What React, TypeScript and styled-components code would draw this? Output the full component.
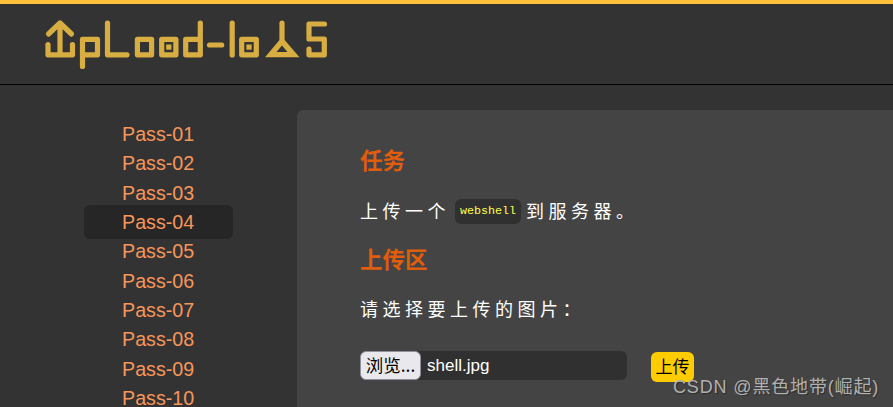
import React from "react";
import styled, { createGlobalStyle } from "styled-components";

const Global = createGlobalStyle`
  html, body { margin: 0; padding: 0; background: #333; height: 100%; overflow: hidden; }
  body { font-family: "Liberation Sans", "Noto Sans CJK SC", sans-serif; }
`;
const Page = styled.div`
  width: 893px; height: 407px; overflow: hidden; position: relative; background: #333;
  display: flex; flex-direction: column;
`;
const Header = styled.header`
  height: 80px; flex: none; box-sizing: content-box;
  border-top: 4px solid #ffc13b; border-bottom: 1px solid #000;
  background: #333; padding-left: 44px; display: flex; align-items: flex-start;
`;
const Logo = styled.svg`
  width: 290px; height: 80px; display: block; flex: none;
`;
const Main = styled.div`
  display: flex; flex: 1; min-height: 0; align-items: flex-start;
`;
const Side = styled.nav`
  width: 149px; flex: none; margin: 32px 64px 0 84px;
  display: flex; flex-direction: column;
`;
const Item = styled.a<{ $active?: boolean }>`
  display: block; height: 34px; line-height: 34px; margin-bottom: -4.7px;
  padding-left: 38px; font-size: 19.7px; color: #f7965a; border-radius: 6px;
  background: ${p => (p.$active ? "#262626" : "transparent")};
`;
const Panel = styled.section`
  flex: 1; height: 340px; margin-top: 25px; padding: 34px 0 0 63px;
  background: #444; border-radius: 6px 0 0 0; display: flex; flex-direction: column; align-items: flex-start;
`;
const Title = styled.h2<{ $gap?: number }>`
  margin: ${p => p.$gap ?? 0}px 0 0; font-size: 22.5px; line-height: 30px; font-weight: 700; color: #e05d0c;
  font-family: "Noto Sans CJK SC", sans-serif;
`;
const Text = styled.p<{ $gap: number }>`
  margin: ${p => p.$gap}px 0 0; font-size: 18px; line-height: 30px; color: #fff; letter-spacing: 4.5px;
  font-family: "Noto Sans CJK SC", sans-serif; font-weight: 400;
  display: flex; align-items: center; white-space: pre;
`;
const Code = styled.code`
  font-family: "Liberation Mono", monospace; font-size: 11.67px; letter-spacing: 0;
  color: #ffff4d; background: #303030; border-radius: 6px; padding: 0 5px; height: 25px; line-height: 25px;
  margin: 3px 5px 0 5px; display: inline-block;
`;
const FormRow = styled.form`
  display: flex; align-items: flex-start; margin: 28px 0 0;
`;
const FileBox = styled.div`
  width: 267px; height: 29px; background: #303030; border-radius: 6px;
  display: flex; align-items: center; color: #fff; font-size: 17px; margin-right: 24px;
`;
const Browse = styled.span`
  box-sizing: border-box; width: 61px; height: 29px; line-height: 25px; background: #e9e9ed; border: 1px solid #8f8f9d;
  border-radius: 6px; color: #000; font-size: 17.5px; text-align: center; margin-right: 6px;
  font-family: "Noto Sans CJK SC", sans-serif; font-weight: 400;
`;
const Submit = styled.span`
  box-sizing: border-box; width: 43px; height: 30px; line-height: 28px; margin-top: 1px; background: #ffcc00; border-radius: 6px;
  color: #000; font-size: 17px; text-align: center; font-family: "Noto Sans CJK SC", sans-serif;
`;
const Watermark = styled.div`
  position: absolute; left: 673px; top: 375px; font-size: 18px; line-height: 24px; color: #b0b0b0; letter-spacing: 0.85px;
  text-shadow: 1px 1px 1px rgba(0,0,0,.35);
  font-family: "Liberation Sans", "Noto Sans CJK SC", sans-serif; white-space: nowrap;
`;

const names = ["01","02","03","04","05","06","07","08","09","10"];
const GOLD = "#d8ae42";

export default function App() {
  return (
    <Page>
      <Global />
      <Header>
        <Logo viewBox="44 4 290 80" aria-label="Upload-labs">
          <g fill="none" stroke={GOLD} strokeWidth="5.2" strokeLinejoin="round" strokeLinecap="round">
            <path d="M48.5 34 L60 23 L71.5 34 M60 23 V54 M48 44.5 V54.8 H72.5 V44.5" />
            <path d="M82.5 66.5 V39.3 H97.5 V54.8 H82.5" />
            <path d="M107.5 23 V54.8 H127" />
            <rect x="137.4" y="39.3" width="14.2" height="15.5" />
            <rect x="161.7" y="39.3" width="14.2" height="15.5" />
            <path d="M200.3 23 V54.8 H185.7 V39.3 H200.3" />
            <path d="M209.5 45 H221.7" />
            <path d="M232.2 23 V55" />
            <rect x="241.7" y="39.3" width="14.6" height="15.5" />
            <path d="M282 23 V42" />
            <path d="M324.5 24 H309 V39 H324.3 V54.8 H309 V49" />
          </g>
          <rect x="166.2" y="44.5" width="5.2" height="5.2" fill={GOLD} />
          <rect x="246.4" y="44.5" width="5.2" height="5.2" fill={GOLD} />
          <path fillRule="evenodd" d="M282 37 L299.5 57.3 H265 Z M282 45.5 L276.5 52 H287.5 Z" fill={GOLD} />
        </Logo>
      </Header>
      <Main>
        <Side>
          {names.map(n => (
            <Item key={n} $active={n === "04"}>Pass-{n}</Item>
          ))}
        </Side>
        <Panel>
          <Title>任务</Title>
          <Text $gap={21}>上传一个<Code>webshell</Code>到服务器。</Text>
          <Title $gap={18}>上传区</Title>
          <Text $gap={20}>请选择要上传的图片：</Text>
          <FormRow>
            <FileBox><Browse>浏览...</Browse>shell.jpg</FileBox>
            <Submit>上传</Submit>
          </FormRow>
        </Panel>
      </Main>
      <Watermark>CSDN @黑色地带(崛起)</Watermark>
    </Page>
  );
}
